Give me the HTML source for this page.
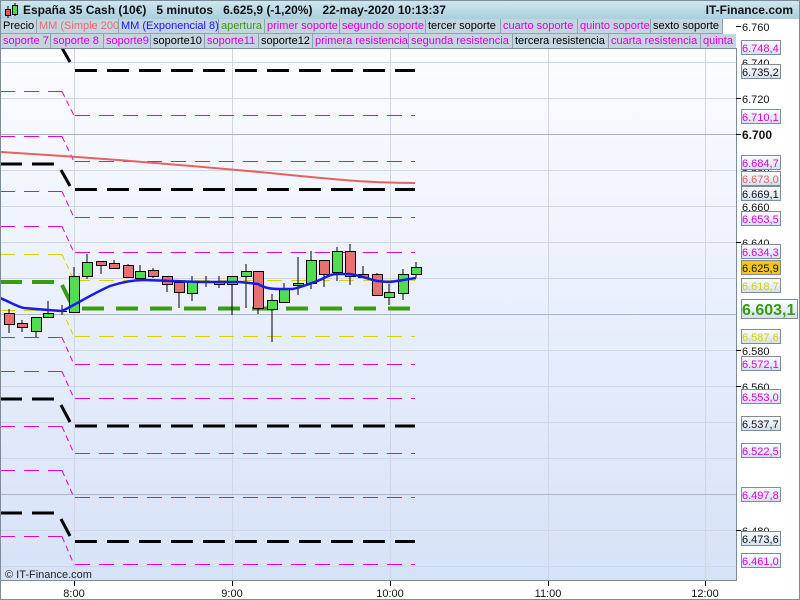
<!DOCTYPE html>
<html><head><meta charset="utf-8"><style>
*{margin:0;padding:0;box-sizing:border-box}
body{width:800px;height:600px;overflow:hidden;background:#fff;font-family:"Liberation Sans",sans-serif;position:relative}
#frame{position:absolute;left:0;top:0;width:800px;height:600px;border:1px solid #7d8c99}
#top{position:absolute;left:1px;top:1px;width:798px;height:18px;background:linear-gradient(#cfe6ee,#a9cfdd);font-weight:bold;font-size:12px;line-height:18px;color:#111}
.row{position:absolute;left:1px;height:15px;font-size:11px;line-height:14px;white-space:nowrap;overflow:hidden}
.row span{position:absolute;top:0;height:15px;padding-left:2px;background:#c3d5de;border-right:1px solid #8fa2ad;border-bottom:1px solid #8fa2ad;overflow:hidden}
.m{color:#e000e0}
</style></head><body>
<div id="frame"></div>
<div id="top">
<svg style="position:absolute;left:3px;top:2px" width="16" height="16"><line x1="4" y1="3" x2="4" y2="15" stroke="#000"/><rect x="1.5" y="6.5" width="5" height="6" fill="#e55" stroke="#000"/><line x1="11" y1="0" x2="11" y2="13" stroke="#000"/><rect x="8.5" y="2.5" width="5" height="9" fill="#4d4" stroke="#000"/></svg>
<span style="position:absolute;left:22px;top:0">España 35 Cash (10€)&nbsp;&nbsp; 5 minutos&nbsp;&nbsp; 6.625,9 (-1,20%)&nbsp;&nbsp; 22-may-2020 10:13:37</span>
<span style="position:absolute;right:6px;top:0">IT-Finance.com</span>
</div>
<div class="row" style="top:19px;width:735px">
<span style="left:0;width:36px">Precio</span>
<span style="left:36px;width:82px;color:#ee6a6a">MM (Simple 200)</span>
<span style="left:118px;width:100px;color:#1818ff">MM (Exponencial 8)</span>
<span style="left:218px;width:46px;color:#3a9a1a">apertura</span>
<span class="m" style="left:264px;width:75px">primer soporte</span>
<span class="m" style="left:339px;width:86px">segundo soporte</span>
<span style="left:425px;width:75px">tercer soporte</span>
<span class="m" style="left:500px;width:77px">cuarto soporte</span>
<span class="m" style="left:577px;width:73px">quinto soporte</span>
<span style="left:650px;width:72px">sexto soporte</span>
</div>
<div class="row" style="top:34px;width:735px">
<span class="m" style="left:0;width:50px">soporte 7</span>
<span class="m" style="left:50px;width:53px">soporte 8</span>
<span class="m" style="left:103px;width:47px">soporte9</span>
<span style="left:150px;width:54px">soporte10</span>
<span class="m" style="left:204px;width:54px">soporte11</span>
<span style="left:258px;width:54px">soporte12</span>
<span class="m" style="left:312px;width:96px">primera resistencia</span>
<span class="m" style="left:408px;width:104px">segunda resistencia</span>
<span style="left:512px;width:96px">tercera resistencia</span>
<span class="m" style="left:608px;width:92px">cuarta resistencia</span>
<span class="m" style="left:700px;width:40px">quinta resistencia</span>
</div>
<svg style="position:absolute;left:0;top:0" width="800" height="600" font-family="Liberation Sans, sans-serif" font-size="12">
<defs>
<linearGradient id="bg" x1="0" y1="0" x2="0" y2="1"><stop offset="0" stop-color="#fbfcff"/><stop offset="1" stop-color="#d6e2f8"/></linearGradient>
<linearGradient id="lb" x1="0" y1="0" x2="0" y2="1"><stop offset="0" stop-color="#fdfeff"/><stop offset="1" stop-color="#d3dff0"/></linearGradient>
<clipPath id="c"><rect x="1" y="49" width="735" height="531"/></clipPath>
</defs>
<rect x="1" y="49" width="735" height="531" fill="url(#bg)"/>
<g clip-path="url(#c)">
<g stroke="#cfd6e4" stroke-width="1">
<line x1="0" x2="736" y1="26.5" y2="26.5"/><line x1="0" x2="736" y1="62.5" y2="62.5"/><line x1="0" x2="736" y1="98.5" y2="98.5"/>
<line x1="0" x2="736" y1="170.5" y2="170.5"/><line x1="0" x2="736" y1="206.5" y2="206.5"/><line x1="0" x2="736" y1="242.5" y2="242.5"/><line x1="0" x2="736" y1="278.5" y2="278.5"/>
<line x1="0" x2="736" y1="350.5" y2="350.5"/><line x1="0" x2="736" y1="386.5" y2="386.5"/><line x1="0" x2="736" y1="422.5" y2="422.5"/><line x1="0" x2="736" y1="458.5" y2="458.5"/>
<line x1="0" x2="736" y1="530.5" y2="530.5"/><line x1="0" x2="736" y1="566.5" y2="566.5"/>
<line x1="74.5" x2="74.5" y1="49" y2="580"/><line x1="232.5" x2="232.5" y1="49" y2="580"/><line x1="390.5" x2="390.5" y1="49" y2="580"/><line x1="548.5" x2="548.5" y1="49" y2="580"/><line x1="705.5" x2="705.5" y1="49" y2="580"/>
</g>
<g stroke="#aab4c8"><line x1="0" x2="736" y1="134.5" y2="134.5"/><line x1="0" x2="736" y1="314.5" y2="314.5"/><line x1="0" x2="736" y1="494.5" y2="494.5"/></g>
<!-- thin magenta -->
<g stroke="#e000e0" stroke-width="1" fill="none">
<g stroke-dasharray="15,9">
<line x1="0" x2="62" y1="91.5" y2="91.5"/><line x1="75" x2="415" y1="115.5" y2="115.5"/>
<line x1="0" x2="62" y1="136.5" y2="136.5"/><line x1="75" x2="415" y1="161.5" y2="161.5"/>
<line x1="0" x2="62" y1="191.5" y2="191.5"/><line x1="75" x2="415" y1="217.5" y2="217.5"/>
<line x1="0" x2="62" y1="226.5" y2="226.5"/><line x1="75" x2="415" y1="252.5" y2="252.5"/>
<line x1="0" x2="62" y1="337.5" y2="337.5"/><line x1="75" x2="415" y1="364.5" y2="364.5"/>
<line x1="0" x2="62" y1="371.5" y2="371.5"/><line x1="75" x2="415" y1="398.5" y2="398.5"/>
<line x1="0" x2="62" y1="426.5" y2="426.5"/><line x1="75" x2="415" y1="453.5" y2="453.5"/>
<line x1="0" x2="62" y1="470.5" y2="470.5"/><line x1="75" x2="415" y1="497.5" y2="497.5"/>
<line x1="0" x2="62" y1="536.5" y2="536.5"/><line x1="75" x2="415" y1="564.5" y2="564.5"/>
<line x1="75" x2="415" y1="47.5" y2="47.5"/>
</g>
<g stroke-dasharray="6,4">
<line x1="62" y1="91.5" x2="74" y2="115.5"/><line x1="62" y1="136.5" x2="74" y2="161.5"/><line x1="62" y1="191.5" x2="74" y2="217.5"/><line x1="62" y1="226.5" x2="74" y2="252.5"/>
<line x1="62" y1="337.5" x2="74" y2="364.5"/><line x1="62" y1="371.5" x2="74" y2="398.5"/><line x1="62" y1="426.5" x2="74" y2="453.5"/><line x1="62" y1="470.5" x2="74" y2="497.5"/><line x1="62" y1="536.5" x2="74" y2="564.5"/>
</g>
</g>
<g stroke="#d8d000" stroke-width="1" fill="none">
<g stroke-dasharray="15,9">
<line x1="0" x2="62" y1="254.5" y2="254.5"/><line x1="75" x2="415" y1="280.5" y2="280.5"/>
<line x1="0" x2="62" y1="310.5" y2="310.5"/><line x1="75" x2="415" y1="336.5" y2="336.5"/>
</g>
<line x1="62" y1="254.5" x2="74" y2="280.5" stroke-dasharray="6,4"/><line x1="62" y1="310.5" x2="74" y2="336.5" stroke-dasharray="6,4"/>
</g>
<g stroke="#000" stroke-width="3" fill="none">
<g stroke-dasharray="22,10">
<line x1="0" x2="56" y1="36" y2="36"/><line x1="75" x2="415" y1="70.5" y2="70.5"/>
<line x1="0" x2="56" y1="164" y2="164"/><line x1="75" x2="415" y1="189.5" y2="189.5"/>
<line x1="0" x2="56" y1="399" y2="399"/><line x1="75" x2="415" y1="426" y2="426"/>
<line x1="0" x2="56" y1="513" y2="513"/><line x1="75" x2="415" y1="541.5" y2="541.5"/>
</g>
<line x1="62" y1="48" x2="70" y2="62"/><line x1="61" y1="170" x2="70" y2="186"/><line x1="61" y1="405" x2="70" y2="422"/><line x1="61" y1="519" x2="70" y2="536"/>
</g>
<g stroke="#3a9a10" stroke-width="4" fill="none">
<line x1="0" x2="56" y1="282" y2="282" stroke-dasharray="22,10"/>
<line x1="82" x2="415" y1="308.5" y2="308.5" stroke-dasharray="22,12"/>
<line x1="62" y1="285" x2="72" y2="305"/>
</g>
<path d="M0,152 C100,158 200,166 300,176 C350,181 380,183 415,183" fill="none" stroke="#e86060" stroke-width="2"/>
<g stroke="#000" stroke-width="1">
<line x1="9" y1="309" x2="9" y2="333"/><rect x="4.5" y="313.5" width="10" height="11" fill="#e87070"/>
<line x1="22" y1="320" x2="22" y2="332"/><rect x="17.5" y="323.5" width="10" height="4" fill="#e87070"/>
<line x1="36" y1="317" x2="36" y2="337"/><rect x="31.5" y="317.5" width="10" height="14" fill="#50dd50"/>
<line x1="48" y1="301" x2="48" y2="317"/><rect x="43.5" y="313.5" width="10" height="4" fill="#50dd50"/>
<line x1="62" y1="305" x2="62" y2="315"/><line x1="57" y1="311.5" x2="67" y2="311.5"/>
<line x1="74" y1="267" x2="74" y2="313"/><rect x="69.5" y="276.5" width="10" height="36" fill="#50dd50"/>
<line x1="87" y1="254" x2="87" y2="279"/><rect x="82.5" y="262.5" width="10" height="14" fill="#50dd50"/>
<line x1="101" y1="261" x2="101" y2="274"/><rect x="96.5" y="261.5" width="10" height="4" fill="#e87070"/>
<line x1="114" y1="260" x2="114" y2="268"/><rect x="109.5" y="263.5" width="10" height="5" fill="#e87070"/>
<line x1="128" y1="264" x2="128" y2="277"/><rect x="123.5" y="265.5" width="10" height="12" fill="#e87070"/>
<line x1="140" y1="265" x2="140" y2="278"/><rect x="135.5" y="271.5" width="10" height="7" fill="#50dd50"/>
<line x1="153" y1="268" x2="153" y2="278"/><rect x="148.5" y="270.5" width="10" height="6" fill="#e87070"/>
<line x1="167" y1="276" x2="167" y2="292"/><rect x="162.5" y="276.5" width="10" height="8" fill="#e87070"/>
<line x1="179" y1="282" x2="179" y2="308"/><rect x="174.5" y="282.5" width="10" height="10" fill="#e87070"/>
<line x1="192" y1="276" x2="192" y2="301"/><rect x="187.5" y="281.5" width="10" height="12" fill="#50dd50"/>
<line x1="206" y1="276" x2="206" y2="287"/><rect x="201.5" y="281.5" width="10" height="1" fill="#50dd50"/>
<line x1="219" y1="276" x2="219" y2="288"/><rect x="214.5" y="282.5" width="10" height="2" fill="#50dd50"/>
<line x1="232" y1="276" x2="232" y2="315"/><rect x="227.5" y="276.5" width="10" height="8" fill="#50dd50"/>
<line x1="246" y1="264" x2="246" y2="308"/><rect x="241.5" y="271.5" width="10" height="5" fill="#50dd50"/>
<line x1="258" y1="271" x2="258" y2="314"/><rect x="253.5" y="271.5" width="10" height="37" fill="#e87070"/>
<line x1="272" y1="294" x2="272" y2="342"/><rect x="267.5" y="300.5" width="10" height="9" fill="#50dd50"/>
<line x1="284" y1="283" x2="284" y2="302"/><rect x="279.5" y="288.5" width="10" height="14" fill="#50dd50"/>
<line x1="298" y1="257" x2="298" y2="295"/><rect x="293.5" y="283.5" width="10" height="2" fill="#50dd50"/>
<line x1="311" y1="251" x2="311" y2="289"/><rect x="306.5" y="260.5" width="10" height="23" fill="#50dd50"/>
<line x1="324" y1="261" x2="324" y2="287"/><rect x="319.5" y="260.5" width="10" height="14" fill="#e87070"/>
<line x1="337" y1="247" x2="337" y2="281"/><rect x="332.5" y="251.5" width="10" height="21" fill="#50dd50"/>
<line x1="350" y1="244" x2="350" y2="285"/><rect x="345.5" y="251.5" width="10" height="25" fill="#e87070"/>
<line x1="363" y1="266" x2="363" y2="278"/><rect x="358.5" y="274.5" width="10" height="3" fill="#e87070"/>
<line x1="377" y1="273" x2="377" y2="295"/><rect x="372.5" y="274.5" width="10" height="21" fill="#e87070"/>
<line x1="389" y1="284" x2="389" y2="305"/><rect x="384.5" y="292.5" width="10" height="5" fill="#50dd50"/>
<line x1="403" y1="269" x2="403" y2="300"/><rect x="398.5" y="274.5" width="10" height="19" fill="#50dd50"/>
<line x1="416" y1="262" x2="416" y2="278"/><rect x="411.5" y="267.5" width="10" height="7" fill="#50dd50"/>
</g>
<path d="M0,298 C10,302 18,307 24,308 L48,310 L62,311 C75,305 90,295 110,286 C125,281 135,280 145,280 L200,282 L240,282 L258,284 C265,288 270,289 280,289 L292,289 C300,288 305,285 315,282 C325,278 330,274 337,274 L350,274 C358,275 365,278 377,281 L389,282 C400,281 408,279 416,278" fill="none" stroke="#1a1aee" stroke-width="2.5"/>
</g>
<rect x="0.5" y="48.5" width="736" height="532" fill="none" stroke="#7d8c99"/>
<text x="5" y="578" font-size="11" fill="#222">© IT-Finance.com</text>
<g stroke="#000"><line x1="74.5" y1="581" x2="74.5" y2="586"/><line x1="232.5" y1="581" x2="232.5" y2="586"/><line x1="390.5" y1="581" x2="390.5" y2="586"/><line x1="548.5" y1="581" x2="548.5" y2="586"/><line x1="705.5" y1="581" x2="705.5" y2="586"/></g>
<g font-size="11" fill="#111" text-anchor="middle"><text x="74" y="597">8:00</text><text x="232" y="597">9:00</text><text x="390" y="597">10:00</text><text x="548" y="597">11:00</text><text x="705" y="597">12:00</text></g>
<g font-size="11" fill="#111">
<text x="742" y="31">6.760</text><text x="742" y="67">6.740</text><text x="742" y="103">6.720</text><text x="742" y="139" font-weight="bold" font-size="12">6.700</text>
<text x="742" y="175">6.680</text><text x="742" y="211">6.660</text><text x="742" y="247">6.640</text><text x="742" y="355">6.580</text><text x="742" y="391">6.560</text>
<text x="742" y="535">6.480</text>
</g>
<g stroke="#000"><line x1="736" y1="26.5" x2="741" y2="26.5"/><line x1="736" y1="98.5" x2="741" y2="98.5"/><line x1="736" y1="134.5" x2="741" y2="134.5"/><line x1="736" y1="242.5" x2="741" y2="242.5"/><line x1="736" y1="350.5" x2="741" y2="350.5"/><line x1="736" y1="386.5" x2="741" y2="386.5"/><line x1="736" y1="530.5" x2="741" y2="530.5"/></g>
<g font-size="11" stroke-width="1">
<g fill="#e000e0"><rect x="741.5" y="40.5" width="39" height="14" fill="url(#lb)" stroke="#7d8c99"/><text x="742" y="52">6.748,4</text></g>
<g fill="#111"><rect x="741.5" y="64.5" width="39" height="14" fill="url(#lb)" stroke="#7d8c99"/><text x="742" y="76">6.735,2</text></g>
<g fill="#e000e0"><rect x="741.5" y="109.5" width="39" height="14" fill="url(#lb)" stroke="#7d8c99"/><text x="742" y="121">6.710,1</text></g>
<g fill="#e000e0"><rect x="741.5" y="155.5" width="39" height="14" fill="url(#lb)" stroke="#7d8c99"/><text x="742" y="167">6.684,7</text></g>
<g fill="#e86060"><rect x="741.5" y="171.5" width="39" height="14" fill="url(#lb)" stroke="#7d8c99"/><text x="742" y="183">6.673,0</text></g>
<g fill="#111"><rect x="741.5" y="186.5" width="39" height="14" fill="url(#lb)" stroke="#7d8c99"/><text x="742" y="198">6.669,1</text></g>
<g fill="#e000e0"><rect x="741.5" y="211.5" width="39" height="14" fill="url(#lb)" stroke="#7d8c99"/><text x="742" y="223">6.653,5</text></g>
<g fill="#e000e0"><rect x="741.5" y="244.5" width="39" height="14" fill="url(#lb)" stroke="#7d8c99"/><text x="742" y="256">6.634,3</text></g>
<g fill="#111"><rect x="741.5" y="260.5" width="39" height="14" fill="#f5c518" stroke="#7d8c99"/><text x="742" y="272">6.625,9</text></g>
<g fill="#d8d000"><rect x="741.5" y="278.5" width="39" height="14" fill="url(#lb)" stroke="#7d8c99"/><text x="742" y="290">6.618,7</text></g>
<g fill="#3a9a10"><rect x="741.5" y="299.5" width="56" height="19" fill="url(#lb)" stroke="#7d8c99"/><text x="742" y="315" font-size="16" font-weight="bold">6.603,1</text></g>
<g fill="#d8d000"><rect x="741.5" y="329.5" width="39" height="14" fill="url(#lb)" stroke="#7d8c99"/><text x="742" y="341">6.587,6</text></g>
<g fill="#e000e0"><rect x="741.5" y="356.5" width="39" height="14" fill="url(#lb)" stroke="#7d8c99"/><text x="742" y="368">6.572,1</text></g>
<g fill="#e000e0"><rect x="741.5" y="389.5" width="39" height="14" fill="url(#lb)" stroke="#7d8c99"/><text x="742" y="401">6.553,0</text></g>
<g fill="#111"><rect x="741.5" y="416.5" width="39" height="14" fill="url(#lb)" stroke="#7d8c99"/><text x="742" y="428">6.537,7</text></g>
<g fill="#e000e0"><rect x="741.5" y="443.5" width="39" height="14" fill="url(#lb)" stroke="#7d8c99"/><text x="742" y="455">6.522,5</text></g>
<g fill="#e000e0"><rect x="741.5" y="487.5" width="39" height="14" fill="url(#lb)" stroke="#7d8c99"/><text x="742" y="499">6.497,8</text></g>
<g fill="#111"><rect x="741.5" y="531.5" width="39" height="14" fill="url(#lb)" stroke="#7d8c99"/><text x="742" y="543">6.473,6</text></g>
<g fill="#e000e0"><rect x="741.5" y="553.5" width="39" height="14" fill="url(#lb)" stroke="#7d8c99"/><text x="742" y="565">6.461,0</text></g>
</g>
</svg>
</body></html>
